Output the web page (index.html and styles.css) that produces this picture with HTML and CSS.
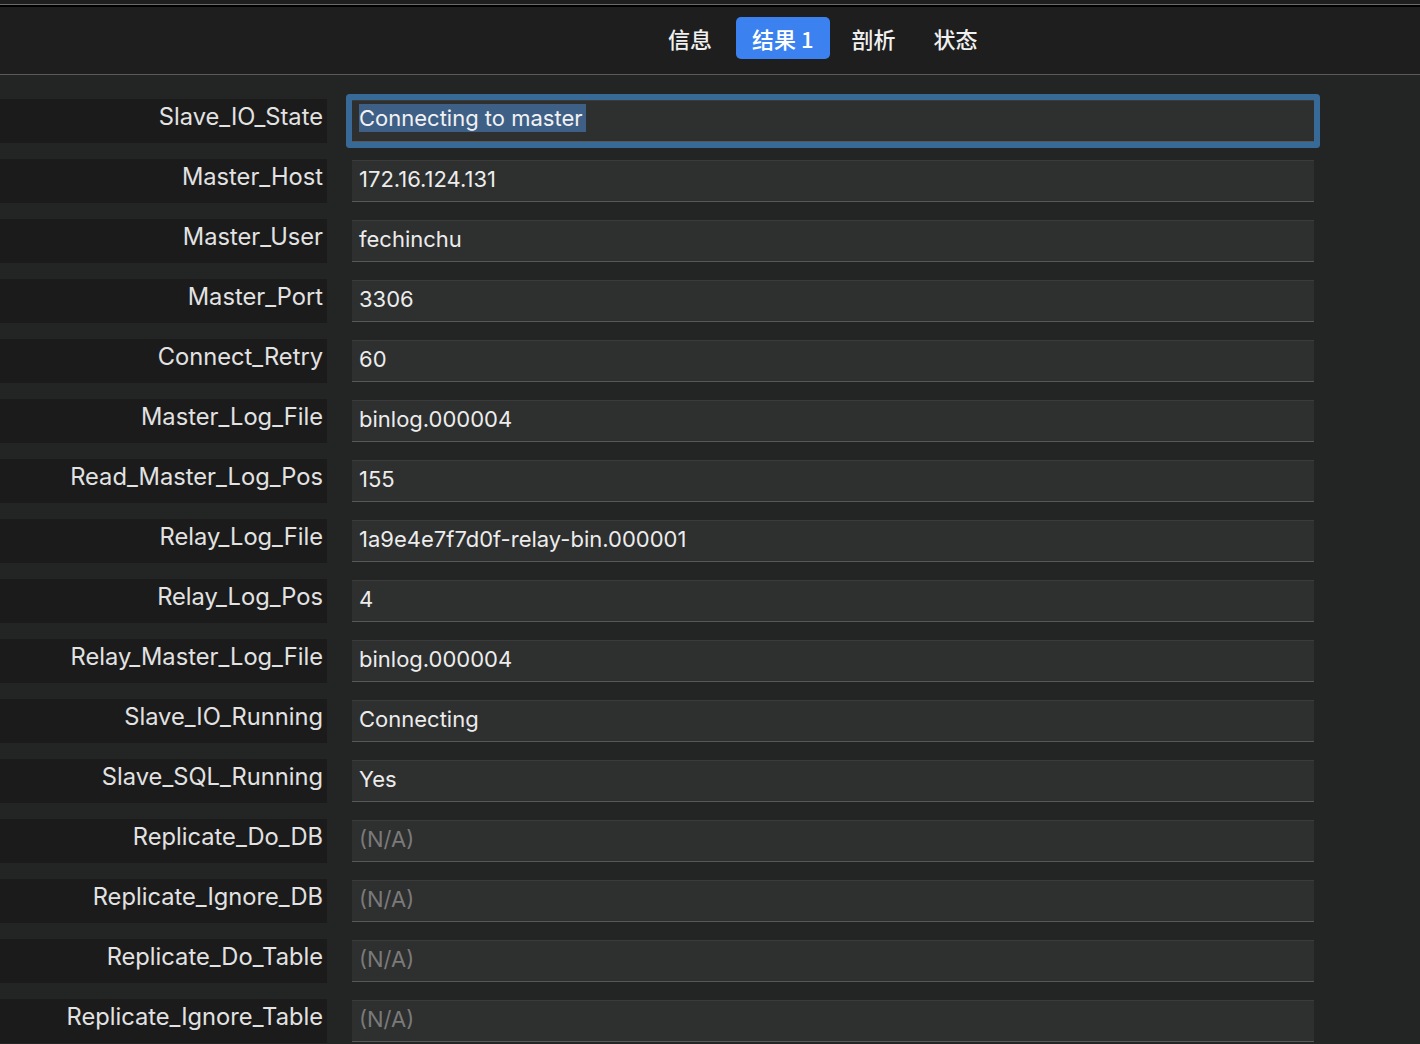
FILE: index.html
```html
<!DOCTYPE html>
<html lang="zh">
<head>
<meta charset="utf-8">
<title>Result</title>
<link rel="stylesheet" href="styles.css">
</head>
<body>
<div class="topbar"></div>
<header class="header">
  <nav class="tabs">
    <span class="tab tab-info">信息</span>
    <span class="tab tab-active">结果 1</span>
    <span class="tab tab-profile">剖析</span>
    <span class="tab tab-status">状态</span>
  </nav>
</header>
<main class="content">
  <div class="row"><div class="label">Slave_IO_State</div><div class="field focused"><span class="sel">Connecting to master</span></div></div>
  <div class="row"><div class="label">Master_Host</div><div class="field">172.16.124.131</div></div>
  <div class="row"><div class="label">Master_User</div><div class="field">fechinchu</div></div>
  <div class="row"><div class="label">Master_Port</div><div class="field">3306</div></div>
  <div class="row"><div class="label">Connect_Retry</div><div class="field">60</div></div>
  <div class="row"><div class="label">Master_Log_File</div><div class="field">binlog.000004</div></div>
  <div class="row"><div class="label">Read_Master_Log_Pos</div><div class="field">155</div></div>
  <div class="row"><div class="label">Relay_Log_File</div><div class="field">1a9e4e7f7d0f-relay-bin.000001</div></div>
  <div class="row"><div class="label">Relay_Log_Pos</div><div class="field">4</div></div>
  <div class="row"><div class="label">Relay_Master_Log_File</div><div class="field">binlog.000004</div></div>
  <div class="row"><div class="label">Slave_IO_Running</div><div class="field">Connecting</div></div>
  <div class="row"><div class="label">Slave_SQL_Running</div><div class="field">Yes</div></div>
  <div class="row"><div class="label">Replicate_Do_DB</div><div class="field na">(N/A)</div></div>
  <div class="row"><div class="label">Replicate_Ignore_DB</div><div class="field na">(N/A)</div></div>
  <div class="row"><div class="label">Replicate_Do_Table</div><div class="field na">(N/A)</div></div>
  <div class="row"><div class="label">Replicate_Ignore_Table</div><div class="field na">(N/A)</div></div>
</main>
</body>
</html>
```

FILE: styles.css
```css
html, body {
  margin: 0;
  padding: 0;
  height: 100%;
  overflow: hidden;
  background: #232424;
  font-family: "Inter", "Noto Sans CJK SC", sans-serif;
}

.topbar {
  height: 4px;
  background: #1e1e1e;
  border-bottom: 1px solid #6a6a6a;
  box-shadow: 0 2px 0 #000;
  position: relative;
  z-index: 1;
}

.header {
  height: 69px;
  background: #1e1e1e;
  border-bottom: 1px solid #5a5a5a;
  display: flex;
  align-items: center;
}

.tabs {
  display: flex;
  align-items: center;
  margin-left: 668px;
  margin-top: -4px;
  font-family: "Noto Sans CJK SC", "Inter", sans-serif;
  font-size: 22px;
  font-weight: 500;
  color: #f0f0f0;
}

.tab {
  line-height: 42px;
  height: 42px;
}

.tab-active {
  background: #3b82f0;
  border-radius: 5px;
  padding: 0 16px;
  margin-left: 24px;
  color: #ffffff;
}

.tab-profile {
  margin-left: 22px;
}

.tab-status {
  margin-left: 38px;
}

.content {
  display: flex;
  flex-direction: column;
  gap: 16px;
  padding-top: 24px;
}

.row {
  display: grid;
  grid-template-columns: 327px 962px;
  column-gap: 25px;
  height: 44px;
}

.label {
  background: #1b1b1b;
  color: #e2e2e2;
  font-size: 23.7px;
  line-height: 35px;
  height: 44px;
  text-align: right;
  padding-right: 4px;
  white-space: nowrap;
}

.field {
  margin-top: 1px;
  height: 40px;
  background: #2e2f2f;
  border-top: 1px solid #3b3b3b;
  border-bottom: 1px solid #585858;
  color: #ececec;
  font-size: 22px;
  line-height: 37px;
  padding-left: 7px;
  white-space: nowrap;
}

.field.na {
  color: #7a7a7a;
}

.field.focused {
  box-shadow: 0 0 0 6px #386a98;
  border-radius: 1px;
  line-height: 35px;
}

.sel {
  display: inline-block;
  height: 28px;
  line-height: 28px;
  background: #3e5f86;
  color: #f2f2f2;
  padding-right: 3px;
  vertical-align: baseline;
}
```
